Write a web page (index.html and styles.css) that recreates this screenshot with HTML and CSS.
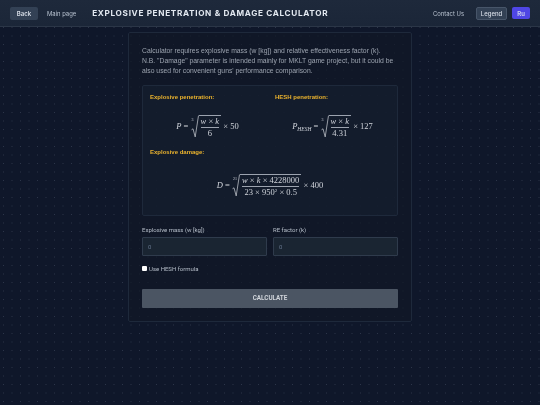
FILE: index.html
```html
<!DOCTYPE html>
<html lang="en">
<head>
<meta charset="utf-8">
<title>Explosive Penetration &amp; Damage Calculator</title>
<link rel="stylesheet" href="styles.css">
</head>
<body>
<header class="topbar">
  <a class="btn btn-back">Back</a>
  <a class="nav-link main-link">Main page</a>
  <h1 class="title">EXPLOSIVE PENETRATION &amp; DAMAGE CALCULATOR</h1>
  <a class="nav-link contact">Contact Us</a>
  <a class="btn btn-legend">Legend</a>
  <a class="btn btn-lang">Ru</a>
</header>
<main class="card">
  <p class="intro">Calculator requires explosive mass (w [kg]) and relative effectiveness factor (k).<br>N.B. "Damage" parameter is intended mainly for MKLT game project, but it could be also used for convenient guns' performance comparison.</p>
  <section class="formulas">
    <div class="formula-row">
      <div class="formula-col">
        <h2 class="f-label">Explosive penetration:</h2>
        <div class="math math-a">
          <span><i>P</i> =</span>
          <span class="root"><sup class="idx">3</sup>
            <svg class="rad" viewBox="0 0 8 21" preserveAspectRatio="none"><path d="M0.5 13.5 L2 12.6 L4.2 20 L7.5 0.5"/></svg>
            <span class="frac"><span class="num"><i>w</i> × <i>k</i></span><span class="den">6</span></span>
          </span>
          <span>× 50</span>
        </div>
      </div>
      <div class="formula-col">
        <h2 class="f-label">HESH penetration:</h2>
        <div class="math math-b">
          <span><i>P<sub>HESH</sub></i> =</span>
          <span class="root"><sup class="idx">3</sup>
            <svg class="rad" viewBox="0 0 8 21" preserveAspectRatio="none"><path d="M0.5 13.5 L2 12.6 L4.2 20 L7.5 0.5"/></svg>
            <span class="frac"><span class="num"><i>w</i> × <i>k</i></span><span class="den">4.31</span></span>
          </span>
          <span>× 127</span>
        </div>
      </div>
    </div>
    <h2 class="f-label f-label-damage">Explosive damage:</h2>
    <div class="math math-c">
      <span><i>D</i> =</span>
      <span class="root"><sup class="idx">21</sup>
        <svg class="rad rad-tall" viewBox="0 0 8 21" preserveAspectRatio="none"><path d="M0.5 13.5 L2 12.6 L4.2 20 L7.5 0.5"/></svg>
        <span class="frac"><span class="num"><i>w</i> × <i>k</i> × 4228000</span><span class="den">23 × 950<sup class="pow">2</sup> × 0.5</span></span>
      </span>
      <span>× 400</span>
    </div>
  </section>
  <form class="calc">
    <div class="fields">
      <label class="field"><span class="field-label">Explosive mass (w [kg])</span><input class="input" placeholder="0"></label>
      <label class="field"><span class="field-label">RE factor (k)</span><input class="input" placeholder="0"></label>
    </div>
    <label class="check"><span class="box"></span>Use HESH formula</label>
    <button type="button" class="submit">CALCULATE</button>
  </form>
</main>
</body>
</html>
```
FILE: styles.css
```css
* { box-sizing: border-box; }
html, body { margin: 0; height: 100%; overflow: hidden; }
body {
  background-color: #0f172a;
  background-image: radial-gradient(circle, rgba(148,163,184,.22) .5px, transparent .8px);
  background-size: 8.5px 8.5px;
  background-position: -.75px -2.25px;
  font-family: "Liberation Sans", sans-serif;
  color: #9ca3af;
}
.topbar {
  height: 27px;
  display: flex;
  align-items: center;
  padding: 0 10px;
  background: linear-gradient(#1e293b, #1b2638);
  border-bottom: 1px solid #2b3647;
  will-change: transform;
}
.btn {
  display: flex; align-items: center; justify-content: center;
  height: 13px; border-radius: 2px;
  font: 500 6px "Inter", sans-serif;
}
.btn-back { width: 28px; background: #334155; color: #d8dee8; font-weight: 600; }
.nav-link { font: 400 5.9px "Inter", sans-serif; color: #b8c2d0; }
.main-link { margin-left: 9px; }
.title {
  margin: 0 0 0 16px; flex: 1;
  font: 700 8.2px "Inter", sans-serif;
  letter-spacing: .67px; color: #e2e8f0;
}
.btn-legend { width: 31px; margin-left: 12px; background: #334155; border: 1px solid #475569; color: #d8dee8; }
.btn-lang { width: 18px; height: 12px; margin-left: 5px; background: #4f46e5; color: #e2e8f0; }
.card {
  width: 284px; height: 290px;
  margin: 5px 0 0 128px;
  padding: 13px 13px 0;
  background: #111827b3;
  border: 1px solid #1e293b;
  border-radius: 2px;
  will-change: transform;
}
.intro { margin: 0; font-size: 6.8px; line-height: 10.2px; color: #9ca3af; }
.formulas {
  height: 131px; margin-top: 8px; padding: 8px 7px;
  background: #151e2fb3;
  border: 1px solid #1e293b;
  border-radius: 2px;
}
.formula-row { display: grid; grid-template-columns: 115px 115px; column-gap: 10px; height: 55px; }
.f-label { margin: 0; font: 700 6px "Liberation Sans", sans-serif; color: #eab32e; }
.f-label-damage { height: 7px; }
.math {
  display: flex; align-items: center; justify-content: center; gap: 2.2px;
  font: 8.5px "Liberation Serif", serif; color: #d1d5db; white-space: nowrap;
}
.math-a, .math-b { margin-top: 15px; }
.math-c { margin-top: 18px; }
.math sub { font-size: 5.5px; vertical-align: -2px; line-height: 0; }
.root { display: inline-flex; align-items: stretch; position: relative; }
.idx { position: absolute; left: 1px; top: 3px; font-size: 4px; line-height: 1; }
.rad { width: 8px; flex: none; }
.rad path { fill: none; stroke: #d1d5db; stroke-width: .7; vector-effect: non-scaling-stroke; }
.frac {
  display: inline-flex; flex-direction: column; align-items: center;
  border-top: 1px solid #9ca3af; padding: 1px 2px 0; line-height: 9px;
}
.num { padding-bottom: 1px; border-bottom: 1px solid #9ca3af; width: 100%; text-align: center; }
.den { padding-top: 1px; }
.pow { font-size: 5px; line-height: 0; vertical-align: 3px; }
.calc { margin-top: 10px; }
.fields { display: grid; grid-template-columns: 125px 125px; column-gap: 6px; }
.field { display: flex; flex-direction: column; gap: 4px; }
.field-label { font: 6px/7px "Roboto", sans-serif; color: #b6bec9; }
.input {
  height: 19px; width: 100%; padding: 0 5px;
  background: #1a2532; border: 1px solid #2f3b4c; border-radius: 1px;
  font: 6px "Roboto", sans-serif; color: #cbd5e1; outline: 0;
}
.input::placeholder { color: #64748b; }
.check { display: flex; align-items: center; gap: 2px; margin-top: 9px; font: 6px/7px "Roboto", sans-serif; color: #b6bec9; }
.box { width: 5px; height: 5px; background: #fff; border-radius: 1px; }
.submit {
  display: block; width: 100%; height: 19px; margin-top: 17px;
  background: #4b5563; border: 0; border-radius: 1px;
  font: 700 6.3px "Roboto", sans-serif; color: #d1d5db;
}
```
